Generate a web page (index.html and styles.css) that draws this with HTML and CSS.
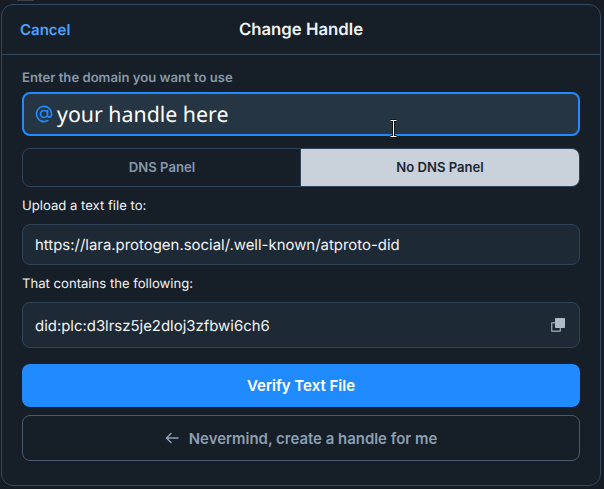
FILE: index.html
```html
<!DOCTYPE html>
<html lang="en">
<head>
<meta charset="utf-8">
<title>Change Handle</title>
<link rel="stylesheet" href="styles.css">
</head>
<body>
<div class="backdrop-hint" aria-hidden="true"></div>
<main class="modal">
  <header class="modal-header">
    <a class="cancel">Cancel</a>
    <h1 class="title">Change Handle</h1>
  </header>
  <section class="modal-body">
    <label class="label">Enter the domain you want to use</label>
    <div class="handle-input">
      <svg class="at" viewBox="0 0 24 24" width="20" height="20"><path d="M16.2 12a4.2 4.2 0 1 1-8.4 0 4.2 4.2 0 0 1 8.4 0Zm0-4.2v5.6c0 3.3 4.9 3.2 4.9-1.4a9.1 9.1 0 1 0-4.6 7.9" /></svg>
      <span class="handle-text">your handle here</span>
    </div>
    <div class="tabs">
      <button class="tab">DNS Panel</button>
      <button class="tab selected">No DNS Panel</button>
    </div>
    <p class="caption upload">Upload a text file to:</p>
    <div class="value url"><span>https://lara.protogen.social/.well-known/atproto-did</span></div>
    <p class="caption contains">That contains the following:</p>
    <div class="value did">
      <span class="did-text">did:plc:d3lrsz5je2dloj3zfbwi6ch6</span>
      <svg class="copy" viewBox="0 0 14 14" width="14" height="14"><path class="back" d="M4 4.7H1.2a.5.5 0 0 0-.5.5v7.6a.5.5 0 0 0 .5.5h7.6a.5.5 0 0 0 .5-.5V10" /><rect class="front" x="4" y="0" width="10" height="10" rx=".7" /></svg>
    </div>
    <button class="button primary">Verify Text File</button>
    <button class="button secondary">
      <svg class="arrow" viewBox="0 0 14 12" width="14" height="12"><path d="M13 6H2M6 1.5 1.5 6 6 10.5" /></svg>
      <span class="secondary-text">Nevermind, create a handle for me</span>
    </button>
  </section>
</main>
<svg class="cursor" viewBox="0 0 9 19" width="9" height="19"><path class="edge" d="M1.5 1.5h6M4.5 1.5v16M1.5 17.5h6" /><path class="core" d="M1.5 1.5h6M4.5 1.5v16M1.5 17.5h6" /></svg>
</body>
</html>
```

FILE: styles.css
```css
* { box-sizing: border-box; }
body {
  margin: 0;
  padding: 4px 3px 3px 1px;
  height: 489px;
  overflow: hidden;
  background: #171b24;
  color: #f1f3f5;
  font-family: Inter, "Liberation Sans", sans-serif;
  text-rendering: geometricPrecision;
}
.backdrop-hint {
  position: absolute;
  left: 17px;
  top: 0;
  width: 17px;
  height: 1px;
  background: #3b4249;
}
.modal {
  height: 482px;
  border: 1px solid #34495f;
  border-radius: 12px;
  background: #161e27;
}
.modal-header {
  display: grid;
  grid-template-columns: 1fr auto 1fr;
  align-items: center;
  height: 50px;
  padding: 0 18px;
  border-bottom: 1px solid #34495f;
}
.cancel {
  color: #4ca2fe;
  font-size: 15px;
  font-weight: 600;
}
.title {
  margin: 1px 0 0;
  font-size: 16.75px;
  font-weight: 600;
}
.modal-body {
  display: flex;
  flex-direction: column;
  padding: 14px 20px 0;
}
.label {
  height: 18px;
  margin-bottom: 5px;
  color: #8798aa;
  font-size: 13.125px;
  font-weight: 600;
  line-height: 18px;
}
.handle-input {
  display: flex;
  align-items: center;
  height: 44px;
  padding: 0 10px;
  border: 2px solid #208bfe;
  border-radius: 8px;
  background: #263543;
}
.at { fill: none; stroke: #208bfe; stroke-width: 2; stroke-linecap: round; }
.handle-text {
  margin: 1px 0 0 3px;
  color: #fff;
  font: 21.33px/30px "Noto Sans", sans-serif;
}
.tabs {
  display: grid;
  grid-template-columns: 277px 1fr;
  height: 39px;
  margin-top: 12px;
  border: 1px solid #2e4258;
  border-radius: 8px;
  overflow: hidden;
}
.tab {
  padding: 0 0 1px 1px;
  border: 0;
  background: none;
  color: #8798aa;
  font: 600 13.125px Inter, sans-serif;
}
.tab.selected {
  padding-left: 0;
  border-left: 1px solid #2e4258;
  background: #c9d1db;
  color: #1c2733;
}
.caption {
  height: 18px;
  margin: 0;
  font-size: 13.125px;
  line-height: 18px;
}
.upload { margin-top: 10px; }
.contains { margin-top: 10px; }
.value {
  display: flex;
  align-items: center;
  justify-content: space-between;
  margin-top: 9px;
  padding: 0 14px 0 12px;
  border: 1px solid #2e4258;
  border-radius: 8px;
  background: #1e2936;
  font-size: 14.93px;
}
.url { height: 41px; }
.did { height: 46px; }
.did-text { padding-top: 2px; }
.copy .back { fill: none; stroke: #8d9cab; stroke-width: 1.4; }
.copy .front { fill: #aebbc9; }
.button {
  display: flex;
  align-items: center;
  justify-content: center;
  gap: 10px;
  padding: 0;
  border: 0;
  border-radius: 8px;
  font: 600 15px Inter, sans-serif;
}
.primary {
  height: 43px;
  margin-top: 16px;
  background: #208bfe;
  color: #fff;
}
.secondary {
  height: 46px;
  margin-top: 8px;
  border: 1px solid #465a70;
  background: none;
  color: #8d9eb2;
  font-size: 14.95px;
}
.secondary-text { padding-top: 2px; }
.arrow { fill: none; stroke: #8d9eb2; stroke-width: 1.5; stroke-linecap: round; stroke-linejoin: round; }
.cursor { position: absolute; left: 389px; top: 119px; fill: none; }
.cursor .edge { stroke: #10161d; stroke-width: 3; }
.cursor .core { stroke: #fff; stroke-width: 1; }
```
